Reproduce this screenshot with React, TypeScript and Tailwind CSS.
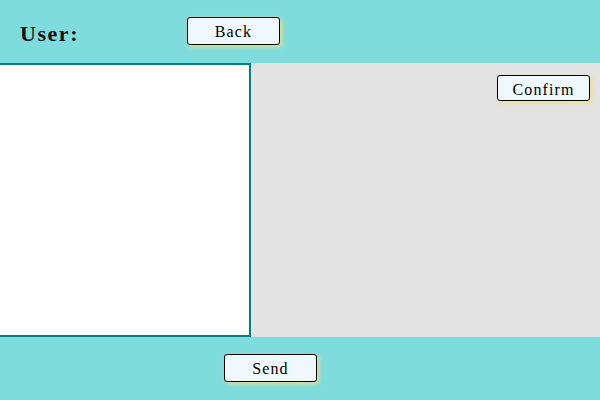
import React from "react";

const serif = { fontFamily: '"Liberation Serif", "DejaVu Serif", serif' };

function Btn({ label, className = "" }: { label: string; className?: string }) {
  return (
    <button
      className={`w-[93px] rounded-[3px] border border-black bg-[#f0f8ff] pt-[2px] text-[16px] tracking-[0.07em] text-black shadow-[2px_2px_4px_rgba(235,225,140,0.9)] ${className}`}
      style={serif}
    >
      {label}
    </button>
  );
}

export default function App() {
  return (
    <div className="flex h-[400px] w-[600px] flex-col overflow-hidden bg-[#7fdcdc]" style={serif}>
      <div className="flex h-[63px] items-center">
        <div className="ml-[20px] w-[167px] pt-[3px] text-[22px] font-bold tracking-[0.07em] text-[#111]">
          User:
        </div>
        <Btn label="Back" className="mb-[1px] h-[28px]" />
      </div>

      <div className="flex h-[274px]">
        <div className="w-[251px] border-y-2 border-r-2 border-[#008080] bg-white" />
        <div className="flex flex-1 justify-end bg-[#e3e3e3] pr-[10px] pt-[12px]">
          <Btn label="Confirm" className="h-[26px]" />
        </div>
      </div>

      <div className="flex flex-1 pt-[17px]">
        <Btn label="Send" className="ml-[224px] h-[28px]" />
      </div>
    </div>
  );
}
